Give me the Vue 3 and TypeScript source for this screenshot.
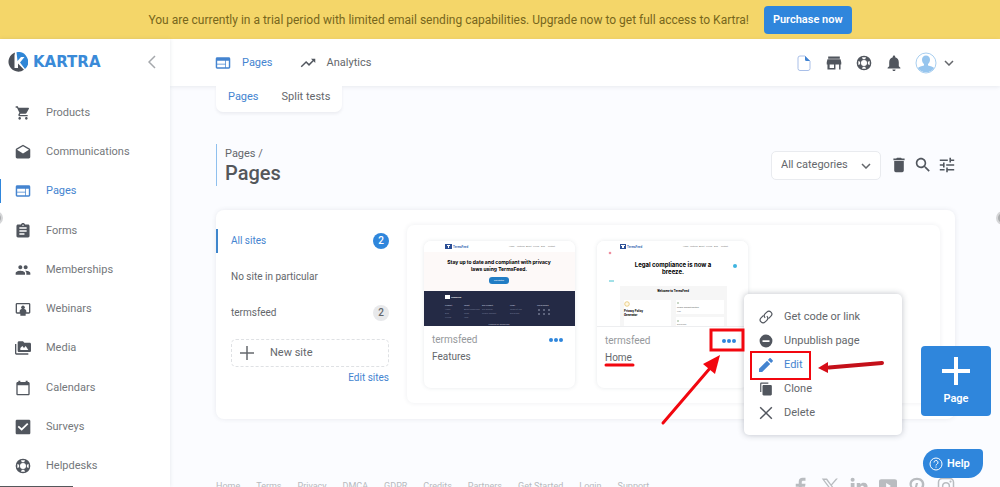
<script setup lang="ts">
import { ref } from 'vue'

const icons: Record<string, string> = {
  cart: 'M7 18c-1.1 0-1.99.9-1.99 2S5.9 22 7 22s2-.9 2-2-.9-2-2-2zM1 2v2h2l3.6 7.59-1.35 2.45c-.16.28-.25.61-.25.96 0 1.1.9 2 2 2h12v-2H7.42c-.14 0-.25-.11-.25-.25l.03-.12.9-1.63h7.45c.75 0 1.41-.41 1.75-1.03l3.58-6.49c.08-.14.12-.31.12-.48 0-.55-.45-1-1-1H5.21l-.94-2H1zm16 16c-1.1 0-1.99.9-1.99 2s.89 2 1.99 2 2-.9 2-2-.9-2-2-2z',
  mail: 'M21.99 8c0-.72-.37-1.35-.94-1.7L12 1 2.95 6.3C2.38 6.65 2 7.28 2 8v10c0 1.1.9 2 2 2h16c1.1 0 2-.9 2-2l-.01-10zM12 13L3.74 7.84 12 3l8.26 4.84L12 13z',
  web: 'M20 4H4c-1.1 0-1.99.9-1.99 2L2 18c0 1.1.9 2 2 2h16c1.1 0 2-.9 2-2V6c0-1.1-.9-2-2-2zm-5 14H4v-4h11v4zm0-5H4V9h11v4zm5 5h-4V9h4v9z',
  form: 'M19 3h-4.18C14.4 1.84 13.3 1 12 1c-1.3 0-2.4.84-2.82 2H5c-1.1 0-2 .9-2 2v14c0 1.1.9 2 2 2h14c1.1 0 2-.9 2-2V5c0-1.1-.9-2-2-2zm-7 0c.55 0 1 .45 1 1s-.45 1-1 1-1-.45-1-1 .45-1 1-1zm2 14H7v-2h7v2zm3-4H7v-2h10v2zm0-4H7V7h10v2z',
  people: 'M16 11c1.66 0 2.99-1.34 2.99-3S17.66 5 16 5c-1.66 0-3 1.34-3 3s1.34 3 3 3zm-8 0c1.66 0 2.99-1.34 2.99-3S9.66 5 8 5C6.34 5 5 6.34 5 8s1.34 3 3 3zm0 2c-2.33 0-7 1.17-7 3.5V19h14v-2.5c0-2.33-4.67-3.5-7-3.5zm8 0c-.29 0-.62.02-.97.05 1.16.84 1.97 1.97 1.97 3.45V19h6v-2.5c0-2.33-4.67-3.5-7-3.5z',
  webinar: 'M3 3h18c1.1 0 2 .9 2 2v12c0 1.1-.9 2-2 2h-5v3H8v-3H3c-1.1 0-2-.9-2-2V5c0-1.1.9-2 2-2zm0 2v12h4v-2c0-2 3-3 3.5-3a2.8 2.8 0 1 1 3 0c.5 0 3.5 1 3.5 3v2h4V5z',
  media: 'M2 6H0v5h.01L0 20c0 1.1.9 2 2 2h18v-2H2V6zm20-2h-8l-2-2H6c-1.1 0-1.99.9-1.99 2L4 16c0 1.1.9 2 2 2h16c1.1 0 2-.9 2-2V6c0-1.1-.9-2-2-2zM8 15v-3l3-3 2.500 3 2.500-3 4 6z',
  calendar: 'M20 3h-1V1h-3v2H8V1H5v2H4c-1.1 0-2 .9-2 2v16c0 1.1.9 2 2 2h16c1.1 0 2-.9 2-2V5c0-1.1-.9-2-2-2zm0 18H4V8h16v13z',
  check: 'M21 1H3c-1.1 0-2 .9-2 2v18c0 1.1.9 2 2 2h18c1.1 0 2-.9 2-2V3c0-1.1-.9-2-2-2zM10 17.5l-6-5.5 1.8-1.8L10 14l8.2-8L20 7.8z',
  help: 'M12 1a11 11 0 1 0 0 22 11 11 0 0 0 0-22zm0 6.500a4.500 4.500 0 1 1 0 9 4.500 4.500 0 0 1 0-9zM9 3.500h6l-1.200 2.700h-3.600zM9 20.500h6l-1.200-2.700h-3.600zM3.500 9v6l2.700-1.200v-3.600zM20.500 9v6l-2.700-1.200v-3.600z',
  trend: 'M16 6l2.29 2.29-4.88 4.88-4-4L2 16.59 3.41 18l6-6 4 4 6.3-6.29L22 12V6z',
  store: 'M20 3H4v3h16V3zm2 9v-1l-1-4H3l-1 4v3h1v7h11v-7h5v7h2v-7h1zm-10 7H6v-5h6v5z',
  bell: 'M12 22c1.1 0 2-.9 2-2h-4c0 1.1.89 2 2 2zm6-6v-5c0-3.07-1.64-5.64-4.5-6.32V4c0-.83-.67-1.5-1.5-1.5s-1.5.67-1.5 1.5v.68C7.63 5.36 6 7.92 6 11v5l-2 2v1h16v-1l-2-2z',
  trash: 'M6 19c0 1.1.9 2 2 2h8c1.1 0 2-.9 2-2V7H6v12zM19 4h-3.5l-1-1h-5l-1 1H5v2h14V4z',
  search: 'M15.5 14h-.79l-.28-.27C15.41 12.59 16 11.11 16 9.5 16 5.91 13.09 3 9.5 3S3 5.91 3 9.5 5.91 16 9.5 16c1.61 0 3.09-.59 4.23-1.57l.27.28v.79l5 4.99L20.49 19l-4.99-5zm-6 0C7.01 14 5 11.99 5 9.5S7.01 5 9.5 5 14 7.01 14 9.5 11.99 14 9.5 14z',
  tune: 'M3 17v2h6v-2H3zM3 5v2h10V5H3zm10 16v-2h8v-2h-8v-2h-2v6h2zM7 9v2H3v2h4v2h2V9H7zm14 4v-2H11v2h10zm-6-4h2V7h4V5h-4V3h-2v6z',
  minus: 'M12 1a11 11 0 1 0 0 22 11 11 0 0 0 0-22zm6 12.5H6v-3h12v3z',
  edit: 'M2 17.5V22h4.5L18 10.5 13.5 6 2 17.5zM21.5 7c.5-.5.5-1.2 0-1.7l-2.8-2.8c-.5-.5-1.2-.5-1.700 0L14.800 4.700l4.500 4.500z',
  copy: 'M16 1H4c-1.1 0-2 .9-2 2v14h2V3h12V1zM8 5h12c1.1 0 2 .9 2 2v14c0 1.1-.9 2-2 2H8c-1.1 0-2-.9-2-2V7c0-1.1.9-2 2-2z',
  facebook: 'M9 23V13H5V9h4V6c0-3.5 2-5 5-5h4v4h-3c-1.5 0-2 .7-2 2v2h5l-.6 4H13v10z',
  x: 'M1 2h7l5.5 7.5L20 2h2.5l-7.9 9.1L23.5 23h-7l-6-8-7 8H1l8.4-9.7zm3.5 2 13 17h2.6L7 4z',
  linkedin: 'M1 8h5v15H1zM3.5 1a2.7 2.7 0 1 1 0 5.4 2.7 2.7 0 0 1 0-5.4zM9 8h4.7v2c1-1.5 2.5-2.4 4.7-2.4 3.8 0 5.1 2.4 5.1 6V23h-5v-8.5c0-1.8-.5-3-2.2-3-1.8 0-2.5 1.3-2.5 3V23H9z',
  youtube: 'M3 3h18c2 0 3 1 3 3v12c0 2-1 3-3 3H3c-2 0-3-1-3-3V6c0-2 1-3 3-3zm6.5 5v8l6.5-4z',
  pinterest: 'M12 1C5.5 1 2 5 2 9.5c0 2.3 1 4.5 3 5.5l1-2.5C5 11.5 5 10.5 5 9.5 5 6.5 7.5 4 12 4c4 0 6.5 2.3 6.5 5.5S16.5 16 14 16c-1.5 0-2.3-1-2-2.5L13.5 8h-3L7 23h3l1.5-5.5c.7.8 1.8 1.3 3 1.3 4 0 7.3-4 7.3-9S18 1 12 1z',
  instagram: 'M7 1h10a6 6 0 0 1 6 6v10a6 6 0 0 1-6 6H7a6 6 0 0 1-6-6V7a6 6 0 0 1 6-6zm0 2a4 4 0 0 0-4 4v10a4 4 0 0 0 4 4h10a4 4 0 0 0 4-4V7a4 4 0 0 0-4-4zm5 3.5a5.5 5.5 0 1 1 0 11 5.5 5.5 0 0 1 0-11zm0 2a3.5 3.5 0 1 0 0 7 3.5 3.5 0 0 0 0-7zM18 4.5a1.500 1.500 0 1 1 0 3 1.500 1.500 0 0 1 0-3z',
}

// Icons whose artwork leaves a margin in the 24-unit grid get a tighter view box.
const boxes: Record<string, string> = {
  web: '1 1 22 22',
  mail: '1 0 22 22',
  form: '1 1 22 22',
  trend: '1 1 22 22',
  store: '1 1 22 22',
  bell: '2 2 20 20',
  trash: '2 2 20 20',
  search: '2 2 20 20',
  tune: '2 2 20 20',
  edit: '2 2 20 20',
}
const box = (name: string) => boxes[name] ?? '0 0 24 24'

const menu = [
  { label: 'Products', icon: 'cart' },
  { label: 'Communications', icon: 'mail' },
  { label: 'Pages', icon: 'web' },
  { label: 'Forms', icon: 'form' },
  { label: 'Memberships', icon: 'people' },
  { label: 'Webinars', icon: 'webinar' },
  { label: 'Media', icon: 'media' },
  { label: 'Calendars', icon: 'calendar' },
  { label: 'Surveys', icon: 'check' },
  { label: 'Helpdesks', icon: 'help' },
]
const tools = [
  { label: 'Store', icon: 'store' },
  { label: 'Support', icon: 'help' },
  { label: 'Notifications', icon: 'bell' },
]
const filters = [
  { label: 'Trash', icon: 'trash' },
  { label: 'Search', icon: 'search' },
  { label: 'Filters', icon: 'tune' },
]
const footerLinks = ['Home', 'Terms', 'Privacy', 'DMCA', 'GDPR', 'Credits', 'Partners', 'Get Started', 'Login', 'Support']
const social = ['facebook', 'x', 'linkedin', 'youtube', 'pinterest', 'instagram']
const category = ref('All categories')
</script>

<template>
  <div class="app">
    <div class="banner">
      <span>You are currently in a trial period with limited email sending capabilities. Upgrade now to get full access to Kartra!</span>
      <button type="button" class="purchase">Purchase now</button>
    </div>

    <div class="shell">
      <aside class="sidebar">
        <div class="brand">
          <a href="#" class="logo">
            <svg viewBox="0 0 20 20" class="logo-mark" aria-hidden="true">
              <path d="M7 .6A9.800 9.800 0 1 0 16 17.800L10 11.500V16H6.500V3.500z" fill="#4c5058" />
              <path d="M8.500 .2A9.800 9.800 0 0 1 17 17L12 10.500 16.500 5H13L9.500 9z" fill="#2f86d6" />
            </svg>
            <span>KARTRA</span>
          </a>
          <button type="button" class="plain collapse" aria-label="Collapse menu">
            <svg viewBox="0 0 8 14"><path d="M7 1 1 7l6 6" class="line" /></svg>
          </button>
        </div>
        <nav class="menu" aria-label="Main">
          <a v-for="item in menu" :key="item.label" href="#" class="menu-item" :class="{ active: item.label === 'Pages' }">
            <svg :viewBox="box(item.icon)" class="icon"><path :d="icons[item.icon]" fill-rule="evenodd" /></svg>
            <span>{{ item.label }}</span>
          </a>
        </nav>
      </aside>

      <main class="main">
        <header class="topbar">
          <nav class="tabs" aria-label="Section">
            <a href="#" class="tab active">
              <svg :viewBox="box('web')" class="icon"><path :d="icons.web" fill-rule="evenodd" /></svg>Pages
            </a>
            <a href="#" class="tab">
              <svg :viewBox="box('trend')" class="icon"><path :d="icons.trend" /></svg>Analytics
            </a>
          </nav>
          <div class="tools">
            <button type="button" class="plain" aria-label="Documents">
              <svg viewBox="0 0 16 16" class="icon">
                <path d="M4 1h5l5 5v7.500q0 2-2 2H4q-2 0-2-2V3q0-2 2-2z" fill="none" stroke="#a9bfe8" />
                <path d="M9 1v3.500Q9 6 10.500 6H14z" fill="#3f83d2" />
              </svg>
            </button>
            <button v-for="tool in tools" :key="tool.label" type="button" class="plain" :aria-label="tool.label">
              <svg :viewBox="box(tool.icon)" class="icon"><path :d="icons[tool.icon]" fill-rule="evenodd" /></svg>
            </button>
            <button type="button" class="plain account" aria-label="Account">
              <svg viewBox="0 0 22 22" class="avatar">
                <circle cx="11" cy="11" r="10" fill="#fff" stroke="#a9cff0" />
                <path d="M11 3.500c2.500 0 4 1.800 4 4.300 0 1.800-.8 3.400-2 4.200v1.500c2.500.8 5 1.200 6.200 2.500A10 10 0 0 1 2.800 16c1.200-1.300 3.700-1.700 6.200-2.500V12c-1.200-.8-2-2.400-2-4.200 0-2.500 1.500-4.300 4-4.300z" fill="#96c5ee" />
              </svg>
              <svg viewBox="0 0 10 6" class="chevron"><path d="M1 1l4 4 4-4" class="line" /></svg>
            </button>
          </div>
        </header>

        <nav class="subtabs" aria-label="Pages views">
          <a href="#" class="active">Pages</a>
          <a href="#">Split tests</a>
        </nav>

        <section class="heading">
          <div class="title">
            <a href="#">Pages /</a>
            <h1>Pages</h1>
          </div>
          <div class="filters">
            <div class="select">
              <select v-model="category" aria-label="Category">
                <option>All categories</option>
              </select>
              <svg viewBox="0 0 10 6" class="chevron"><path d="M1 1l4 4 4-4" class="line" /></svg>
            </div>
            <button v-for="f in filters" :key="f.label" type="button" class="plain" :aria-label="f.label">
              <svg :viewBox="box(f.icon)" class="icon"><path :d="icons[f.icon]" /></svg>
            </button>
          </div>
        </section>

        <section class="panel">
          <div class="sites">
            <a href="#" class="site active"><span>All sites</span><b>2</b></a>
            <a href="#" class="site"><span>No site in particular</span></a>
            <a href="#" class="site"><span>termsfeed</span><b>2</b></a>
            <button type="button" class="new-site">
              <svg viewBox="0 0 14 14"><path d="M7 0v14M0 7h14" /></svg>New site
            </button>
            <a href="#" class="edit-sites">Edit sites</a>
          </div>

          <div class="pages">
            <article class="card">
              <svg viewBox="0 0 151 85" class="thumb">
                <rect width="151" height="85" fill="#fff" />
                <rect y="11" width="151" height="39" fill="#fdf9f8" />
                <rect x="21" y="3" width="7" height="5" fill="#2b4f96" />
                <path d="M23 4h3v1h-1v2h-1V5h-1z" fill="#fff" />
                <text x="29" y="7" class="t3 b" fill="#3d6cb5">TermsFeed</text>
                <text x="85" y="6" class="t2" fill="#777">Home</text>
                <text x="93" y="6" class="t2" fill="#777">Features</text>
                <text x="102" y="6" class="t2" fill="#777">About</text>
                <text x="109" y="6" class="t2" fill="#777">Pricing</text>
                <text x="117" y="6" class="t2" fill="#777">Blog</text>
                <text x="124" y="6" class="t2" fill="#777">Contact</text>
                <text x="75" y="23" class="t5 b mid">Stay up to date and compliant with privacy</text>
                <text x="75" y="30" class="t5 b mid">laws using TermsFeed.</text>
                <rect x="65" y="36" width="20" height="7" rx="3" fill="#217dc4" />
                <text x="75" y="40" class="t2 mid" fill="#fff">Get started</text>
                <rect y="50" width="151" height="35" fill="#242a45" />
                <rect x="21" y="54" width="5" height="4" fill="#fff" />
                <text x="27" y="57" class="t2 b" fill="#fff">TermsFeed</text>
                <g fill="#b4b9ca" class="t2">
                  <text x="21" y="65" class="b">Product</text><text x="40" y="65" class="b">About</text>
                  <text x="58" y="65" class="b">Key Product</text><text x="86" y="65" class="b">Legal</text>
                  <text x="113" y="65" class="b">Social Media</text>
                </g>
                <g fill="#777e98" class="t2">
                  <text x="21" y="69">Home</text><text x="21" y="73">Blog</text><text x="21" y="77">Pricing</text>
                  <text x="40" y="69">About TermsFeed</text><text x="40" y="73">Team</text><text x="40" y="77">Jobs</text>
                  <text x="58" y="69">Our Mission</text><text x="58" y="73">Cookie Consent</text>
                  <text x="86" y="69">Terms of Use</text><text x="86" y="73">Disclaimer</text>
                </g>
                <path d="M115 68v2M120 68v2M125 68v2M115 72v2M120 72v2M125 72v2" stroke="#969db5" />
                <text x="75" y="84" class="t2 mid" fill="#c5c9d6">Powered by TermsFeed</text>
              </svg>
              <div class="card-info">
                <div><small>termsfeed</small><span>Features</span></div>
                <button type="button" class="plain dots" aria-label="Features options"><i /><i /><i /></button>
              </div>
            </article>

            <article class="card">
              <svg viewBox="0 0 151 85" class="thumb lined">
                <rect width="151" height="85" fill="#fff" />
                <rect x="23" y="3" width="6" height="5" fill="#2b4f96" />
                <path d="M24 4h4v1h-1v2h-2V5h-1z" fill="#fff" />
                <text x="30" y="7" class="t3 b" fill="#3d6cb5">TermsFeed</text>
                <text x="86" y="6" class="t2" fill="#777">Home</text>
                <text x="93" y="6" class="t2" fill="#777">Features</text>
                <text x="102" y="6" class="t2" fill="#777">About</text>
                <text x="109" y="6" class="t2" fill="#777">Pricing</text>
                <text x="117" y="6" class="t2" fill="#777">Blog</text>
                <text x="124" y="6" class="t2" fill="#777">Contact</text>
                <circle cx="13" cy="12" r="1.300" fill="#ee8fa0" />
                <circle cx="138" cy="25" r="2" fill="#3fb4e0" />
                <path d="M12 40h5" stroke="#45c1cf" />
                <text x="76" y="26" class="t6 b mid">Legal compliance is now a</text>
                <text x="76" y="33" class="t6 b mid">breeze.</text>
                <rect x="23" y="45" width="107" height="40" fill="#f6f6f6" />
                <text x="76" y="51" class="t3 b mid">Welcome to TermsFeed</text>
                <rect x="27" y="59" width="47" height="26" fill="#fff" />
                <rect x="79" y="59" width="48" height="14" fill="#fff" />
                <rect x="79" y="76" width="48" height="9" fill="#fff" />
                <circle cx="30" cy="63" r="2.300" fill="#fff8e4" stroke="#e2bd62" stroke-width=".7" />
                <text x="27" y="71" class="t3 b">Privacy Policy</text>
                <text x="27" y="75" class="t3 b">Generator</text>
                <circle cx="81" cy="62" r="1" fill="#b9cbb4" />
                <text x="80" y="67" class="t2" fill="#555">Cookie Consent Solution</text>
                <text x="80" y="71" class="t2" fill="#777">Free</text>
                <circle cx="81" cy="80" r="1" fill="#b9cbb4" />
                <text x="80" y="84" class="t2" fill="#777">Disclaimer</text>
              </svg>
              <div class="card-info">
                <div><small>termsfeed</small><span>Home</span></div>
                <button type="button" class="plain dots" aria-label="Home options"><i /><i /><i /></button>
              </div>

              <div class="popup" role="menu">
                <button type="button" role="menuitem">
                  <svg viewBox="0 0 24 24" class="icon">
                    <g transform="rotate(-45 12 12)" fill="none" stroke="currentColor" stroke-width="2">
                      <path d="M11 7H5a5 5 0 0 0 0 10h4a5 5 0 0 0 5-5" />
                      <path d="M13 17h6a5 5 0 0 0 0-10h-4a5 5 0 0 0-5 5" />
                    </g>
                  </svg>Get code or link
                </button>
                <button type="button" role="menuitem">
                  <svg viewBox="0 0 24 24" class="icon"><path :d="icons.minus" fill-rule="evenodd" /></svg>Unpublish page
                </button>
                <button type="button" role="menuitem" class="active">
                  <svg :viewBox="box('edit')" class="icon"><path :d="icons.edit" /></svg>Edit
                </button>
                <button type="button" role="menuitem">
                  <svg viewBox="0 0 24 24" class="icon"><path :d="icons.copy" /></svg>Clone
                </button>
                <button type="button" role="menuitem">
                  <svg viewBox="0 0 24 24" class="icon"><path d="M2 2l20 20M22 2L2 22" stroke="currentColor" stroke-width="2.500" /></svg>Delete
                </button>
              </div>

              <svg class="marks" viewBox="0 0 300 190" aria-hidden="true">
                <g fill="none" stroke="#f2070f" stroke-width="3">
                  <rect x="114" y="89" width="32" height="20" />
                  <rect x="154" y="111" width="59" height="27" stroke-width="2" />
                  <path d="M9 124h27" stroke-linecap="round" />
                  <path d="M66 182L114 126" stroke-linecap="round" />
                </g>
                <path d="M123 114L106 123 118 133z" fill="#f2070f" />
                <path d="M285 122L232 126.500" stroke="#c4101a" stroke-width="4" stroke-linecap="round" />
                <path d="M221 127L231 121V132z" fill="#d60d17" />
              </svg>
            </article>
          </div>
        </section>

        <footer class="footer">
          <nav aria-label="Footer">
            <a v-for="link in footerLinks" :key="link" href="#">{{ link }}</a>
          </nav>
          <div class="social">
            <a v-for="name in social" :key="name" href="#" :aria-label="name">
              <svg viewBox="0 0 24 24"><path :d="icons[name]" fill-rule="evenodd" /></svg>
            </a>
          </div>
        </footer>
      </main>
    </div>

    <button type="button" class="add-page">
      <svg viewBox="0 0 28 28"><path d="M14 0v28M0 14h28" /></svg>
      <span>Page</span>
    </button>
    <button type="button" class="help">
      <svg viewBox="0 0 14 14">
        <circle cx="7" cy="7" r="6" />
        <path d="M5 5.500a2 2 0 1 1 3 1.700q-1 .5-1 1.300M7 9.500v1.200" />
      </svg>Help
    </button>
    <i class="edge left" />
    <i class="edge right" />
    <i class="status" />
  </div>
</template>

<style>
body { margin: 0; overflow: hidden; }
</style>

<style scoped>
.app {
  --blue: #2f86dc;
  --link: #4484d0;
  --ink: #64676b;
  position: relative;
  display: flex;
  flex-direction: column;
  height: 100vh;
  overflow: hidden;
  background: #fbfcff;
  color: var(--ink);
  font: 11px/16px Roboto, "Liberation Sans", sans-serif;
}
.app *, .app *::before { box-sizing: border-box; }
a { color: inherit; text-decoration: none; }
button { font: inherit; color: inherit; cursor: pointer; }
svg { display: block; flex: none; }
.plain { display: flex; padding: 0; border: 0; background: none; }
.icon { width: 16px; height: 16px; fill: #51565e; color: #51565e; }
.active { color: var(--link); }
.active .icon { fill: var(--link); }
.line { fill: none; stroke: currentColor; stroke-width: 1.5; }
.chevron { width: 10px; height: 6px; }

.banner {
  display: flex;
  align-items: center;
  justify-content: center;
  gap: 15px;
  height: 39px;
  flex: none;
  background: #f4d669;
  color: #77661c;
  font-size: 12px;
}
.purchase {
  height: 28px;
  padding: 0 9px;
  border: 0;
  border-radius: 4px;
  background: var(--blue);
  color: #fff;
  font-size: 11px;
  font-weight: 600;
}

.shell { display: flex; flex: 1; min-height: 0; }
.sidebar {
  display: flex;
  flex-direction: column;
  flex: none;
  width: 170px;
  padding-bottom: 1px;
  background: #fff;
  box-shadow: 0 0 4px rgba(60, 70, 90, 0.12);
  color: #74777b;
  z-index: 2;
}
.brand {
  display: flex;
  align-items: center;
  justify-content: space-between;
  height: 46px;
  margin-bottom: 8px;
  padding: 0 14px 0 8px;
  flex: none;
}
.logo {
  display: flex;
  align-items: center;
  gap: 5px;
  color: #3a8ad8;
  font: bold 15px/20px "DejaVu Sans", sans-serif;
}
.logo-mark { width: 20px; height: 20px; }
.collapse { color: #a5a8ac; }
.collapse svg { width: 8px; height: 14px; }
.menu { display: flex; flex-direction: column; flex: 1; }
.menu-item {
  display: flex;
  align-items: center;
  gap: 15px;
  flex: 1;
  padding-left: 15px;
  position: relative;
}
.menu-item.active { color: var(--link); }
.menu-item.active::before {
  content: "";
  position: absolute;
  left: 0;
  width: 1px;
  height: 24px;
  background: var(--blue);
}

.main { flex: 1; min-width: 0; display: flex; flex-direction: column; }
.topbar {
  display: flex;
  align-items: center;
  justify-content: space-between;
  flex: none;
  height: 47px;
  padding: 0 46px 0 45px;
  background: #fff;
  box-shadow: 0 1px 4px rgba(60, 70, 90, 0.1);
}
.tabs { display: flex; gap: 27px; }
.tab { display: flex; align-items: center; gap: 11px; }
.tools { display: flex; align-items: center; gap: 14px; }
.account { align-items: center; gap: 7px; margin-left: -1px; }
.avatar { width: 22px; height: 22px; }
.subtabs {
  display: flex;
  gap: 23px;
  align-self: flex-start;
  margin-left: 46px;
  padding: 3px 12px 7px;
  border-radius: 0 0 7px 7px;
  background: #fff;
  box-shadow: 0 2px 3px rgba(60, 70, 90, 0.08);
  position: relative;
}
.heading {
  display: flex;
  align-items: center;
  justify-content: space-between;
  margin: 32px 45px 24px 46px;
}
.title { padding: 2px 0 1px 8px; border-left: 1px solid #8fc0ee; }
.title a { display: block; line-height: 15px; }
h1 { margin: 0; color: #54575b; font-size: 20px; line-height: 24px; font-weight: 500; }
.filters { display: flex; align-items: center; gap: 8px; }
.select { position: relative; margin-right: 2px; }
.select select {
  appearance: none;
  height: 29px;
  width: 110px;
  padding: 0 26px 0 9px;
  border: 1px solid #e9ebef;
  border-radius: 5px;
  background: #fff;
  color: var(--ink);
  font: inherit;
}
.select .chevron { position: absolute; right: 10px; top: 12px; pointer-events: none; }

.panel {
  display: flex;
  gap: 18px;
  margin: 0 45px 0 46px;
  padding: 15px 15px 16px;
  border-radius: 8px;
  background: #fff;
  box-shadow: 0 0 5px rgba(60, 70, 90, 0.1);
}
.sites {
  display: flex;
  flex-direction: column;
  flex: none;
  width: 158px;
  font-size: 10px;
}
.site {
  display: flex;
  align-items: center;
  justify-content: space-between;
  height: 24px;
  margin: 4px 0 8px -15px;
  padding-left: 13px;
  border-left: 2px solid transparent;
}
.site.active { border-color: #3f86cc; }
.site b {
  width: 16px;
  height: 16px;
  border-radius: 50%;
  background: #e8e9eb;
  text-align: center;
  font-weight: 500;
}
.site.active b { background: var(--blue); color: #fff; }
.new-site {
  display: flex;
  align-items: center;
  gap: 16px;
  height: 28px;
  margin-top: 6px;
  padding: 0 8px;
  border: 1px dashed #dfe1e4;
  border-radius: 5px;
  background: #fff;
  font-size: 11px;
}
.new-site svg { width: 14px; height: 14px; stroke: #65696e; stroke-width: 1.5; }
.edit-sites { align-self: flex-end; margin-top: 3px; color: var(--link); }

.pages {
  display: flex;
  gap: 22px;
  flex: 1;
  padding: 16px 17px 15px;
  border-radius: 7px;
  box-shadow: 0 0 5px rgba(60, 70, 90, 0.09);
}
.card {
  position: relative;
  width: 151px;
  border-radius: 7px;
  background: #fff;
  box-shadow: 0 0 4px rgba(60, 70, 90, 0.12);
}
.thumb { width: 100%; height: auto; border-radius: 7px 7px 0 0; }
.lined { border-bottom: 1px solid #edeef0; }
.thumb text { font-family: Roboto, sans-serif; }
.thumb .t2 { font-size: 2px; }
.thumb .t3 { font-size: 3px; }
.thumb .t5 { font-family: Inter, sans-serif; font-size: 5px; }
.thumb .t6 { font-family: Inter, sans-serif; font-size: 6px; }
.thumb .b { font-weight: 700; }
.thumb .mid { text-anchor: middle; }
.card-info {
  display: flex;
  justify-content: space-between;
  align-items: flex-start;
  padding: 6px 12px 21px 8px;
  font-size: 10px;
}
.card-info small { display: block; color: #96999c; font-size: 10px; }
.card-info span { display: block; line-height: 18px; }
.dots { gap: 1px; padding: 6px 0; }
.dots i { width: 4px; height: 4px; border-radius: 50%; background: var(--blue); }

.popup {
  position: absolute;
  left: 147px;
  top: 53px;
  width: 158px;
  padding: 11px 0 10px;
  border-radius: 5px;
  background: #fff;
  box-shadow: 0 0 6px rgba(40, 50, 70, 0.3);
  z-index: 3;
}
.popup button {
  display: flex;
  align-items: center;
  gap: 11px;
  width: 100%;
  height: 24px;
  padding: 0 0 0 15px;
  border: 0;
  background: none;
}
.popup .icon { width: 14px; height: 14px; }
.popup .active { color: var(--link); }
.marks {
  position: absolute;
  left: 0;
  top: 0;
  width: 300px;
  height: 190px;
  z-index: 4;
  pointer-events: none;
}

.footer {
  display: flex;
  justify-content: space-between;
  margin: 58px 45px 0 46px;
  color: #b7babe;
  font-size: 9px;
  flex: none;
}
.footer nav { display: flex; gap: 16px; padding-top: 1px; }
.social { display: flex; gap: 11px; }
.social svg { width: 18px; height: 18px; fill: #b9bcc0; }

.add-page {
  position: absolute;
  right: 9px;
  top: 346px;
  display: flex;
  flex-direction: column;
  align-items: center;
  gap: 6px;
  width: 70px;
  height: 70px;
  padding: 11px 0 0;
  border: 0;
  border-radius: 4px;
  background: var(--blue);
  color: #fff;
  font-weight: 600;
}
.add-page svg { width: 28px; height: 28px; stroke: #fff; stroke-width: 4; }
.help {
  position: absolute;
  right: 17px;
  bottom: 9px;
  display: flex;
  align-items: center;
  gap: 4px;
  width: 60px;
  height: 29px;
  padding: 0 0 0 6px;
  border: 0;
  border-radius: 15px 4px 15px 15px;
  background: var(--blue);
  color: #fff;
  font-weight: 600;
}
.help svg { width: 14px; height: 14px; fill: none; stroke: #fff; }
.edge {
  position: absolute;
  top: 211px;
  width: 14px;
  height: 14px;
  border: 2px solid #d5d6d8;
  border-radius: 50%;
  background: #aaacae;
  z-index: 5;
}
.edge.left { left: -11px; }
.edge.right { right: -10px; }
.status {
  position: absolute;
  left: 0;
  bottom: 0;
  width: 73px;
  height: 1px;
  background: #55585c;
  z-index: 5;
}
</style>
